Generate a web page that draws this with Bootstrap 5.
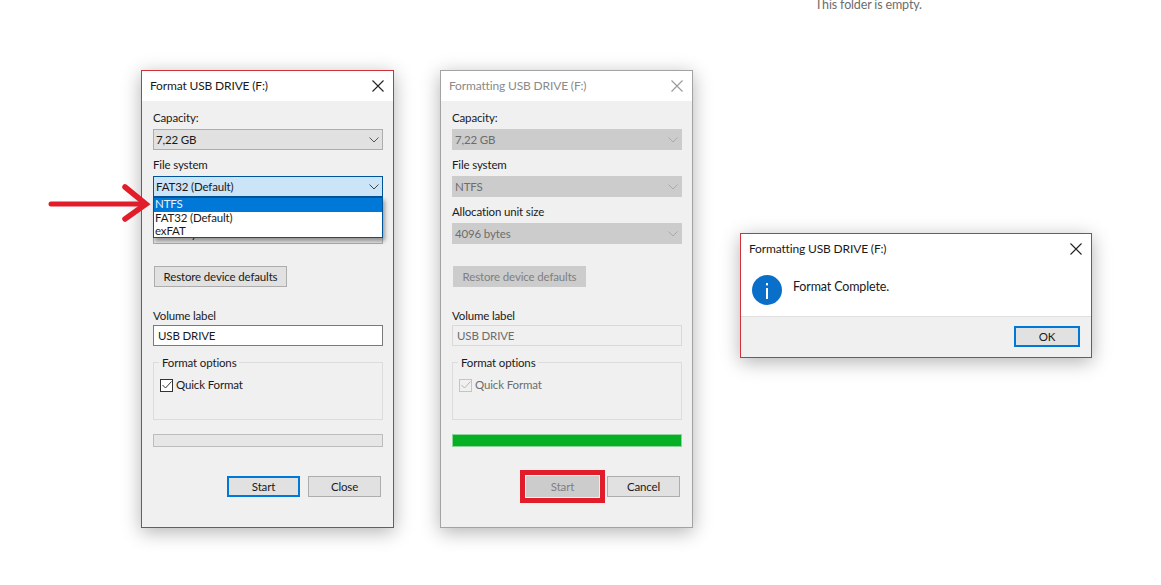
<!DOCTYPE html>
<html lang="en">
<head>
  <meta charset="UTF-8" />
  <title>Format USB Drive</title>
  <link href="https://cdn.jsdelivr.net/npm/bootstrap@5.3.2/dist/css/bootstrap.min.css" rel="stylesheet" />
  <style>
    html, body { height: 585px; overflow: hidden; }
    body { background: #fff; font-family: Lato, "Noto Sans", "Liberation Sans", sans-serif; font-size: 11.5px; letter-spacing: -.15px; line-height: 16px; color: #1a1a1a; }
    .desk { position: relative; width: 1161px; height: 585px; overflow: hidden; }

    .empty-note { position: absolute; left: 815px; top: -3px; color: #6d6d6d; font-size: 12.5px; }
    .red-arrow { position: absolute; left: 46px; top: 182px; z-index: 5; }

    /* windows on the desktop */
    .win { position: absolute; background: #f0f0f0; border: 1px solid #d0303a; box-shadow: 0 4px 18px rgba(0,0,0,.3); }
    .win-a { left: 141px; top: 70px; width: 253px; height: 458px; }
    .win-b { left: 440px; top: 70px; width: 253px; height: 458px; border-color: #a3a3a3; }
    .win-c { left: 740px; top: 233px; width: 352px; height: 125px; }
    .win-title { height: 30px; background: #fff; padding: 0 9px 0 8px; font-size: 12px; }
    .win-b .win-title { color: #8a8a8a; }
    .win-body { padding: 9px 10px 0 11px; }

    .fld-label { height: 16px; margin-bottom: 3px; }
    .fld-next { margin-top: 7px; }
    .combo { position: relative; height: 21px; padding: 0 3px 0 2px; background: #e1e1e1; border: 1px solid #adadad; }
    .combo-open { background: #cce4f7; border-color: #005499; }
    .combo-off { background: #ccc; border-color: #ccc; color: #6d6d6d; }

    .drop-list { position: absolute; left: -1px; right: -1px; top: 20px; z-index: 3; height: 41px; background: #fff; border: 1px solid #005499; box-shadow: 2px 3px 4px rgba(0,0,0,.35); line-height: 12px; }
    .drop-list div { padding-left: 1px; height: 13px; }
    .drop-list .picked { background: #0078d7; color: #e8f2fb; height: 14px; }

    .win-btn { display: block; padding: 0; font-size: 11.5px; letter-spacing: -.15px; line-height: 1; height: 21px; width: 73px; border-radius: 0; background: #e1e1e1; border: 1px solid #adadad; color: #1a1a1a; }
    .win-btn.primary-btn { border: 2px solid #0078d7; }
    .win-btn.off-btn, .win-btn.off-btn:disabled { background: #ccc; border-color: #ccc; color: #7f7f7f; opacity: 1; }
    .restore-btn { width: 133px; margin: 22px 0 0 1px; }
    .marked-btn { outline: 5px solid #e21d2b; outline-offset: 1px; }

    .vol-label { margin: 21px 0 1px; height: 16px; }
    .vol-input { height: 21px; padding: 0 4px 1px; font-size: 11.5px; letter-spacing: -.15px; line-height: 1; border-radius: 0; border: 1px solid #7a7a7a; color: #1a1a1a; }
    .vol-input:disabled { background: #f0f0f0; border-color: #d9d9d9; color: #6d6d6d; opacity: 1; }

    .opt-box { position: relative; margin-top: 16px; height: 58px; border: 1px solid #dcdcdc; padding: 14px 0 0 6px; }
    .opt-legend { position: absolute; left: 5px; top: -8px; padding: 0 3px; background: #f0f0f0; }
    .tick-box { width: 13px; height: 13px; border: 1px solid #333; background: #fff; margin-right: 3px; }
    .off-text { color: #6d6d6d; }
    .off-text .tick-box { border-color: #c4c4c4; background: #f0f0f0; }

    .bar-track { margin-top: 14px; height: 13px; border-radius: 0; background: #e6e6e6; border: 1px solid #bcbcbc; }
    .bar-track .progress-bar { background: #06b025; }
    .win-b .bar-track { border-color: #8fd49d; }

    .btn-row { margin-top: 29px; padding-right: 2px; gap: 8px; }

    .msg-area { height: 52px; background: #fff; padding: 11px 0 0 11px; }
    .msg-text { margin: 4px 0 0 11px; font-size: 12.5px; }
    .msg-foot { height: 41px; border-top: 1px solid #dfdfdf; padding: 9px 11px 0 0; }
    .ok-btn { width: 66px; }
  </style>
</head>
<body>
<div class="desk">
  <div class="empty-note">This folder is empty.</div>

  <svg class="red-arrow" width="106" height="44" viewBox="0 0 106 44">
    <path d="M5 22H98" stroke="#e21d2b" stroke-width="5" stroke-linecap="round" fill="none"/>
    <path d="M79 5L100 22L79 37" stroke="#e21d2b" stroke-width="5.5" stroke-linecap="round" stroke-linejoin="miter" fill="none"/>
  </svg>

  <!-- Format dialog -->
  <div class="win win-a">
    <div class="win-title d-flex justify-content-between align-items-center">
      <span>Format USB DRIVE (F:)</span>
      <svg width="12" height="12" viewBox="0 0 12 12"><path d="M.5.5l11 11M11.5.5l-11 11" stroke="#222" stroke-width="1.1" fill="none"/></svg>
    </div>
    <div class="win-body">
      <div class="fld-label">Capacity:</div>
      <div class="combo d-flex justify-content-between align-items-center">
        <span>7,22 GB</span>
        <svg width="10" height="6" viewBox="0 0 10 6"><path d="M.5.5L5 5 9.5.5" stroke="#555" fill="none"/></svg>
      </div>
      <div class="fld-label fld-next">File system</div>
      <div class="combo combo-open d-flex justify-content-between align-items-center">
        <span>FAT32 (Default)</span>
        <svg width="10" height="6" viewBox="0 0 10 6"><path d="M.5.5L5 5 9.5.5" stroke="#444" fill="none"/></svg>
        <div class="drop-list">
          <div class="picked">NTFS</div>
          <div>FAT32 (Default)</div>
          <div>exFAT</div>
        </div>
      </div>
      <div class="fld-label fld-next">Allocation unit size</div>
      <div class="combo d-flex justify-content-between align-items-center">
        <span>4096 bytes</span>
        <svg width="10" height="6" viewBox="0 0 10 6"><path d="M.5.5L5 5 9.5.5" stroke="#555" fill="none"/></svg>
      </div>
      <button type="button" class="btn win-btn restore-btn">Restore device defaults</button>
      <div class="vol-label">Volume label</div>
      <input class="form-control vol-input" type="text" value="USB DRIVE" />
      <div class="opt-box">
        <span class="opt-legend">Format options</span>
        <div class="d-flex align-items-center">
          <span class="tick-box d-flex align-items-center justify-content-center">
            <svg width="10" height="8" viewBox="0 0 10 8"><path d="M.5 4l3 3L9.5.5" stroke="#333" fill="none"/></svg>
          </span>
          <span>Quick Format</span>
        </div>
      </div>
      <div class="progress bar-track"></div>
      <div class="btn-row d-flex justify-content-end">
        <button type="button" class="btn win-btn primary-btn">Start</button>
        <button type="button" class="btn win-btn">Close</button>
      </div>
    </div>
  </div>

  <!-- Formatting in progress -->
  <div class="win win-b">
    <div class="win-title d-flex justify-content-between align-items-center">
      <span>Formatting USB DRIVE (F:)</span>
      <svg width="12" height="12" viewBox="0 0 12 12"><path d="M.5.5l11 11M11.5.5l-11 11" stroke="#999" stroke-width="1.1" fill="none"/></svg>
    </div>
    <div class="win-body">
      <div class="fld-label">Capacity:</div>
      <div class="combo combo-off d-flex justify-content-between align-items-center">
        <span>7,22 GB</span>
        <svg width="10" height="6" viewBox="0 0 10 6"><path d="M.5.5L5 5 9.5.5" stroke="#aaa" fill="none"/></svg>
      </div>
      <div class="fld-label fld-next">File system</div>
      <div class="combo combo-off d-flex justify-content-between align-items-center">
        <span>NTFS</span>
        <svg width="10" height="6" viewBox="0 0 10 6"><path d="M.5.5L5 5 9.5.5" stroke="#aaa" fill="none"/></svg>
      </div>
      <div class="fld-label fld-next">Allocation unit size</div>
      <div class="combo combo-off d-flex justify-content-between align-items-center">
        <span>4096 bytes</span>
        <svg width="10" height="6" viewBox="0 0 10 6"><path d="M.5.5L5 5 9.5.5" stroke="#aaa" fill="none"/></svg>
      </div>
      <button type="button" class="btn win-btn off-btn restore-btn" disabled>Restore device defaults</button>
      <div class="vol-label">Volume label</div>
      <input class="form-control vol-input" type="text" value="USB DRIVE" disabled />
      <div class="opt-box">
        <span class="opt-legend">Format options</span>
        <div class="d-flex align-items-center off-text">
          <span class="tick-box d-flex align-items-center justify-content-center">
            <svg width="10" height="8" viewBox="0 0 10 8"><path d="M.5 4l3 3L9.5.5" stroke="#b5b5b5" fill="none"/></svg>
          </span>
          <span>Quick Format</span>
        </div>
      </div>
      <div class="progress bar-track">
        <div class="progress-bar" style="width: 100%"></div>
      </div>
      <div class="btn-row d-flex justify-content-end">
        <button type="button" class="btn win-btn off-btn marked-btn" disabled>Start</button>
        <button type="button" class="btn win-btn">Cancel</button>
      </div>
    </div>
  </div>

  <!-- Done message -->
  <div class="win win-c">
    <div class="win-title d-flex justify-content-between align-items-center">
      <span>Formatting USB DRIVE (F:)</span>
      <svg width="12" height="12" viewBox="0 0 12 12"><path d="M.5.5l11 11M11.5.5l-11 11" stroke="#222" stroke-width="1.1" fill="none"/></svg>
    </div>
    <div class="msg-area d-flex align-items-start">
      <svg width="30" height="30" viewBox="0 0 30 30">
        <circle cx="15" cy="15" r="15" fill="#0a6fc9"/>
        <rect x="14" y="13" width="2" height="11" fill="#fff"/>
        <rect x="14" y="8" width="2" height="2.4" fill="#fff"/>
      </svg>
      <div class="msg-text">Format Complete.</div>
    </div>
    <div class="msg-foot d-flex justify-content-end">
      <button type="button" class="btn win-btn primary-btn ok-btn">OK</button>
    </div>
  </div>
</div>
<script src="https://cdn.jsdelivr.net/npm/bootstrap@5.3.2/dist/js/bootstrap.bundle.min.js"></script>
</body>
</html>
